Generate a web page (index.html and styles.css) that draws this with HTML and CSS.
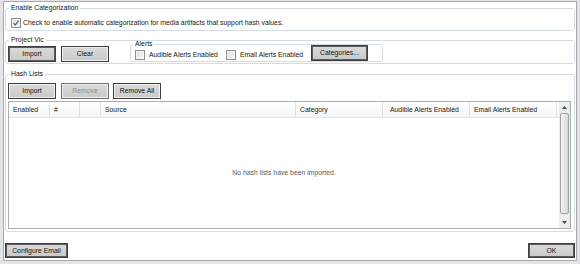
FILE: index.html
```html
<!DOCTYPE html>
<html lang="en">
<head>
  <meta charset="UTF-8" />
  <title>Categorization Settings</title>
  <link rel="stylesheet" href="styles.css">
</head>
<body>
  <div class="window">

    <fieldset class="group enable">
      <legend>Enable Categorization</legend>
      <label class="check-row">
        <span class="check checked">
          <svg viewBox="0 0 8 8" width="8" height="8"><path d="M1.4 4.1 L3.2 6 L6.7 1.6" fill="none" stroke="#55678f" stroke-width="1.3"/></svg>
        </span>
        Check to enable automatic categorization for media artifacts that support hash values.
      </label>
    </fieldset>

    <fieldset class="group vic">
      <legend>Project Vic</legend>
      <div class="vic-row">
        <button class="btn default">Import</button>
        <button class="btn clear">Clear</button>
        <fieldset class="group alerts">
          <legend>Alerts</legend>
          <div class="alerts-row">
            <label class="check-label audible"><span class="check"></span>Audible Alerts Enabled</label>
            <label class="check-label email"><span class="check"></span>Email Alerts Enabled</label>
            <button class="btn default categories">Categories...</button>
          </div>
        </fieldset>
      </div>
    </fieldset>

    <fieldset class="group hash">
      <legend>Hash Lists</legend>
      <div class="hash-buttons">
        <button class="btn">Import</button>
        <button class="btn remove" disabled>Remove</button>
        <button class="btn remove-all">Remove All</button>
      </div>
      <div class="listview">
        <div class="list-main">
          <div class="list-head">
            <span>Enabled</span>
            <span>#</span>
            <span></span>
            <span>Source</span>
            <span>Category</span>
            <span class="wide-pad">Audible Alerts Enabled</span>
            <span>Email Alerts Enabled</span>
          </div>
          <div class="list-body">No hash lists have been imported.</div>
        </div>
        <div class="scrollbar">
          <div class="sb-arrow">
            <svg viewBox="0 0 5 3" width="5" height="3"><path d="M0 3 L2.5 0 L5 3 Z" fill="#4a4a4a"/></svg>
          </div>
          <div class="sb-thumb"></div>
          <div class="sb-track"></div>
          <div class="sb-arrow">
            <svg viewBox="0 0 5 3" width="5" height="3"><path d="M0 0 L2.5 3 L5 0 Z" fill="#4a4a4a"/></svg>
          </div>
        </div>
      </div>
    </fieldset>

    <div class="footer">
      <button class="btn default configure">Configure Email</button>
      <button class="btn default ok">OK</button>
    </div>

  </div>
</body>
</html>
```

FILE: styles.css
```css
* {
  box-sizing: border-box;
}

body {
  margin: 0;
  background: #e2e4e7;
  font-family: "Liberation Sans", Arial, sans-serif;
  font-size: 6.85px;
  line-height: 8px;
  color: #151515;
}

.window {
  height: 260px;
  margin: 1px 3px 0 3px;
  padding: 0 1px;
  background: #fff;
  border: 1px solid #a6aab0;
  display: flex;
  flex-direction: column;
}

/* group boxes */
.group {
  margin: 0;
  padding: 0;
  min-width: 0;
  border: 1px solid #d3dce3;
  border-radius: 3px;
}

.group legend {
  margin-left: 3px;
  padding: 0 2px;
  line-height: 8px;
}

.enable {
  margin-top: 2px;
}

.vic {
  margin-top: 5px;
}

.hash {
  margin-top: 6px;
}

/* checkboxes */
.check {
  width: 10px;
  height: 10px;
  flex: none;
  border: 1px solid #8e8f8f;
  background: linear-gradient(135deg, #dcdcdc, #fbfbfb);
  box-shadow: inset 0 0 0 1px #f4f4f4;
  display: flex;
  align-items: center;
  justify-content: center;
}

.check-row {
  display: flex;
  align-items: center;
  height: 10px;
  margin: 6px 0 2px 5px;
  gap: 2px;
}

.check-label {
  display: flex;
  align-items: center;
  gap: 4px;
  white-space: nowrap;
}

.audible {
  width: 91px;
}

.email {
  width: 85px;
}

/* buttons */
.btn {
  font: inherit;
  color: #111;
  height: 16px;
  width: 48px;
  padding: 0;
  border: 1px solid #3f3f3f;
  border-radius: 0;
  background: linear-gradient(#dadada, #c9c9c9);
  box-shadow: inset 0 0 0 1px #efefef;
  white-space: nowrap;
}

.btn.default {
  box-shadow: inset 0 0 0 1px #5c5c5c;
}

.btn:disabled {
  color: #8e8e8e;
  border-color: #707070;
}

.vic-row {
  display: flex;
  align-items: flex-start;
  padding: 2px 0 1px 2px;
}

.clear {
  margin-left: 5px;
}

.alerts {
  width: 253px;
  margin: -6px 0 0 21px;
}

.alerts legend {
  margin-left: 2px;
}

.alerts-row {
  display: flex;
  align-items: center;
  height: 13px;
  padding-left: 4px;
}

.categories {
  width: 57px;
  margin-top: -3px;
}

.hash-buttons {
  display: flex;
  padding: 5px 0 0 2px;
}

.remove {
  margin-left: 5px;
}

.remove-all {
  margin-left: 4px;
}

/* list view */
.listview {
  display: flex;
  height: 128px;
  margin: 2px 3px 2px 2px;
  border: 1px solid #a9adb4;
  background: #fff;
}

.list-main {
  flex: 1;
  display: flex;
  flex-direction: column;
}

.list-head {
  display: grid;
  grid-template-columns: 41px 30px 21px 195px 87px 87px 87px;
  height: 16px;
  border-bottom: 1px solid #e4e6e9;
  background: linear-gradient(#ffffff, #f4f5f7);
}

.list-head span {
  display: flex;
  align-items: center;
  padding-left: 4px;
  border-right: 1px solid #dfe2e6;
  white-space: nowrap;
  overflow: hidden;
}

.list-head .wide-pad {
  padding-left: 7px;
}

.list-body {
  flex: 1;
  display: flex;
  align-items: center;
  justify-content: center;
  color: #595b60;
}

.scrollbar {
  width: 11px;
  display: flex;
  flex-direction: column;
  background: #ececec;
}

.sb-arrow {
  height: 11px;
  display: flex;
  align-items: center;
  justify-content: center;
}

.sb-thumb {
  height: 101px;
  margin: 0 1px;
  border: 1px solid #a2a2a2;
  border-radius: 2px;
  background: linear-gradient(90deg, #f4f4f4, #d8d8d8);
}

.sb-track {
  flex: 1;
}

/* footer */
.footer {
  margin-top: auto;
  padding-bottom: 2px;
  display: flex;
  justify-content: space-between;
}

.footer .btn {
  height: 15px;
}

.configure {
  width: 63px;
}

.ok {
  width: 47px;
}
```
